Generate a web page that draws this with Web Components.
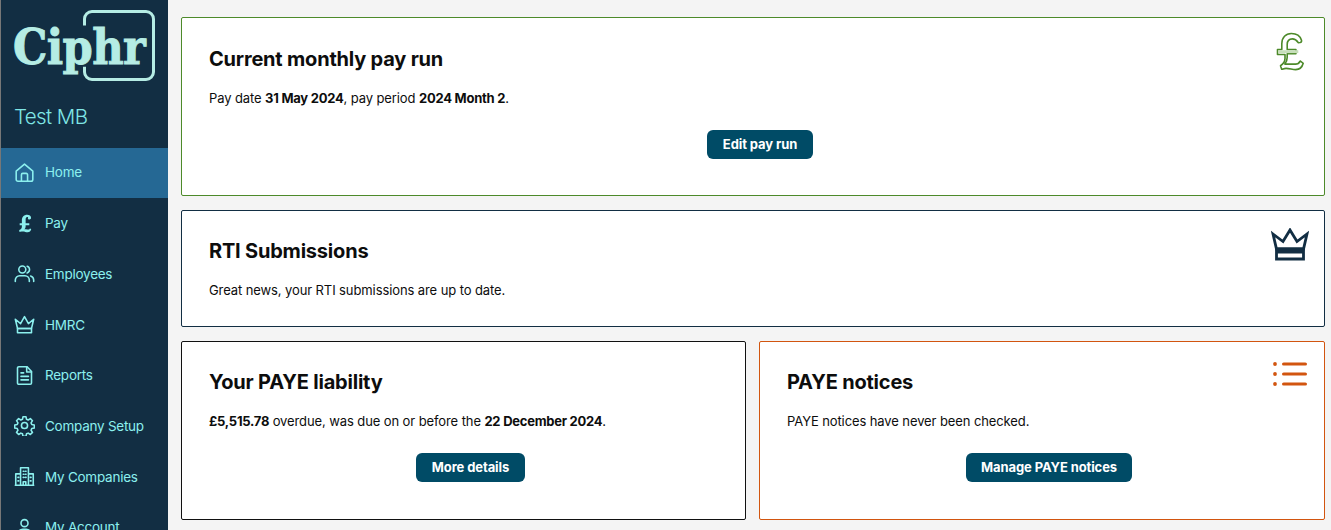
<!DOCTYPE html>
<html lang="en">
<head>
<meta charset="utf-8">
<title>Ciphr</title>
<style>
    html, body { margin: 0; height: 100%; overflow: hidden; background: #f4f4f4; }
    body { font-family: Inter, "Noto Sans", sans-serif; }
    b { font-weight: 700; letter-spacing: -.25px; }
</style>
</head>
<body>
<app-shell>
    <side-bar slot="nav" site="Test MB">
        <nav-item label="Home" icon="home" active></nav-item>
        <nav-item label="Pay" icon="pound"></nav-item>
        <nav-item label="Employees" icon="people"></nav-item>
        <nav-item label="HMRC" icon="crown"></nav-item>
        <nav-item label="Reports" icon="doc"></nav-item>
        <nav-item label="Company Setup" icon="gear"></nav-item>
        <nav-item label="My Companies" icon="building"></nav-item>
        <nav-item label="My Account" icon="user"></nav-item>
    </side-bar>
    <info-card heading="Current monthly pay run" accent="#4d8a2a" icon="pound" button="Edit pay run" style="grid-column: 1 / 3; height: 179px; --pad: 27px">
        Pay date <b>31 May 2024</b>, pay period <b>2024 Month 2</b>.
    </info-card>
    <info-card heading="RTI Submissions" accent="#122e43" icon="crown" style="grid-column: 1 / 3; height: 117px">
        Great news, your RTI submissions are up to date.
    </info-card>
    <info-card heading="Your PAYE liability" accent="#111" button="More details" style="height: 179px">
        <b>£5,515.78</b> overdue, was due on or before the <b>22 December 2024</b>.
    </info-card>
    <info-card heading="PAYE notices" accent="#d2550f" icon="list" button="Manage PAYE notices" style="height: 179px">
        PAYE notices have never been checked.
    </info-card>
</app-shell>

<script>
const ICONS = {
    home: '<path d="M2.500 10.500 12 2.500l9.500 8V20a2 2 0 0 1-2 2h-15a2 2 0 0 1-2-2Z"/><path d="M8.500 22v-7.500a1.500 1.500 0 0 1 1.500-1.500h4a1.500 1.500 0 0 1 1.500 1.500V22"/>',
    pound: '<path fill="currentColor" stroke="none" d="M6 21.500v-2c2-.7 3-2 3-4v-1.500H6.500v-2.300H9V8C9 4.500 11.500 2 15 2c2.500 0 4.500 1.200 4.500 3.500 0 1.200-.8 2-1.900 2-1 0-1.700-.7-1.700-1.600 0-.4.1-.7.3-1-.3-.2-.7-.3-1.100-.3-1.200 0-1.800 1-1.800 3v4h4.200v2.300h-4.200V15c0 1.500-.5 2.700-1.500 3.700 1.200-.2 2-.2 3 .1 1.500.4 2.700.2 3.400-1.200l1.500.8c-.6 2.500-2 3.600-4 3.600-2 0-3.700-.9-5.500-.9-1 0-1.700.2-2.700.4Z"/>',
    people: '<circle cx="9.500" cy="7.500" r="4"/><path d="M1.500 21v-1.500a5 5 0 0 1 5-5h6a5 5 0 0 1 5 5V21"/><path d="M15 3.700a4 4 0 0 1 0 7.600"/><path d="M19 14.800a5 5 0 0 1 3.500 4.700V21"/>',
    crown: '<path d="M1.500 6l6 5L12 3l4.500 8 6-5-2.500 10.500H4Z"/><path d="M4 16.500h16V21.500H4Z"/>',
    doc: '<path d="M5.500 2h9.500l5 5.500V20.500a1.500 1.500 0 0 1-1.500 1.500h-13a1.500 1.500 0 0 1-1.500-1.500v-17a1.500 1.500 0 0 1 1.500-1.500Z"/><path d="M14.500 2v6h5.500M8 9h3M8 13h8.500M8 17h8.500"/>',
    gear: '<circle cx="12" cy="12" r="3.500"/><path d="M10.300 2h3.400l.6 2.900 1.900.8 2.500-1.600 2.400 2.400-1.600 2.500.8 1.900 2.900.6v3.400l-2.900.6-.8 1.900 1.600 2.500-2.400 2.400-2.500-1.600-1.900.8-.6 2.900h-3.400l-.6-2.900-1.900-.8-2.500 1.600-2.400-2.400 1.600-2.500-.8-1.900-2.900-.6v-3.400l2.900-.6.8-1.900-1.600-2.500 2.400-2.400 2.500 1.600 1.900-.8Z"/>',
    building: '<path d="M7.500 22V2h9v20M7.500 9H2v13h5.500M16.500 9H22v13h-5.500M1.500 22h21M10.500 22v-4h3v4"/><path d="M10.500 6h.8M13 6h.8M10.500 9.500h.8M13 9.500h.8M10.500 13h.8M13 13h.8M4.500 13h1M4.500 17h1M18.500 13h1M18.500 17h1"/>',
    user: '<circle cx="12" cy="7" r="4"/><path d="M4 22v-2a6 6 0 0 1 6-6h4a6 6 0 0 1 6 6v2Z"/>'
};

class AppShell extends HTMLElement {
    constructor() {
        super();
        this.attachShadow({ mode: "open" }).innerHTML = `
        <style>
            :host { display: grid; grid-template-columns: 168px 1fr; height: 530px; overflow: hidden; }
            main {
                display: grid;
                grid-template-columns: 565px 566px;
                grid-auto-rows: min-content;
                column-gap: 13px;
                row-gap: 14px;
                padding: 17px 0 0 13px;
            }
        </style>
        <slot name="nav"></slot>
        <main><slot></slot></main>`;
    }
}

class SideBar extends HTMLElement {
    constructor() {
        super();
        this.attachShadow({ mode: "open" }).innerHTML = `
        <style>
            :host { display: block; background: #122e43; border-left: 1px solid #777; height: 530px; overflow: hidden; box-sizing: border-box; }
            .logo { display: flex; align-items: center; height: 105px; padding-left: 12px; position: relative; }
            .word {
                font: 700 48px/1 "DejaVu Serif Condensed", "DejaVu Serif", serif;
                font-stretch: condensed;
                letter-spacing: -.6px;
                color: #b5ece4;
                margin-top: -11px;
                -webkit-text-stroke: .9px #b5ece4;
            }
            .frame {
                position: absolute; left: 82px; top: 10px; width: 72px; height: 71px;
                box-sizing: border-box;
                border: 3px solid #b5ece4; border-radius: 9px;
                clip-path: polygon(0 0, 100% 0, 100% 100%, 0 100%, 0 80%, 6px 80%, 6px 22%, 0 22%);
            }
            .site { font-size: 20.500px; font-weight: 300; line-height: 26px; color: #7fe6e6; padding-left: 13px; margin-top: -1px; letter-spacing: -.6px; height: 43.600px; }
        </style>
        <div class="logo"><span class="word">Ciphr</span><span class="frame"></span></div>
        <div class="site">${this.getAttribute("site")}</div>
        <slot></slot>`;
    }
}

class NavItem extends HTMLElement {
    constructor() {
        super();
        const active = this.hasAttribute("active");
        this.attachShadow({ mode: "open" }).innerHTML = `
        <style>
            :host { display: flex; align-items: center; gap: 10px; box-sizing: border-box; height: 50.700px; padding: 0 0 1px 13px; color: #8cf0ee; font-size: 13.500px; letter-spacing: -.25px; background: ${active ? "#256894" : "transparent"}; }
            svg { width: 21px; height: 21px; flex: none; fill: none; stroke: currentColor; stroke-width: 1.800; stroke-linejoin: round; stroke-linecap: round; }
        </style>
        <svg viewBox="0 0 24 24">${ICONS[this.getAttribute("icon")]}</svg>
        <span>${this.getAttribute("label")}</span>`;
    }
}

const CARD_ICONS = {
    pound: '<svg width="30" height="40" viewBox="0 0 30 40" fill="none" stroke="#4d8a2a" stroke-width="1.600" stroke-linejoin="round"><path d="M2.500 17.500h4.300v-5.700C6.800 5.500 10.800 1.500 16.300 1.500c5.300 0 9 2.700 10.200 6.700.3 1.300-.2 2.100-1.400 2.300l-1.700.2c-1.900-2.500-3.800-3.800-6-3.800-3.200 0-5.200 2.300-5.200 5.700v4.900h8.700v4.300h-8.700v3.500c0 2.700-.9 5-2.300 6.800h10.500c2.600 0 3.800-.9 5-3.100l2.800 2.300c-1 3.900-3.700 6.300-7.500 6.300-3.500 0-6-1.200-9.600-1.200-1.500 0-3 .5-4.400.9l-1.200-3.600c2.600-1.600 4.500-3.900 4.500-7.100v-4.100H2.500Z"/><path d="M3.200 18.200h20.100v2.900H3.200Z" fill="#c7dfba" stroke="none"/></svg>',
    crown: '<svg width="38" height="33" viewBox="0 0 38 33" fill="none" stroke="#122e43" stroke-width="2.800" stroke-linejoin="miter"><path d="M2 6l10 7.500L19 2l7 11.500L36 6l-3.500 15h-27Z"/><path d="M5.500 21h27v10h-27Z"/><path d="M5.500 23h27" stroke-width="5"/></svg>',
    list: '<svg width="36" height="26" viewBox="0 0 36 26" fill="#d2550f"><circle cx="3" cy="3" r="1.900"/><circle cx="3" cy="13" r="1.900"/><circle cx="3" cy="23" r="1.900"/><rect x="10" y="1.400" width="25" height="3.200" rx="1.600"/><rect x="10" y="11.400" width="25" height="3.200" rx="1.600"/><rect x="10" y="21.400" width="25" height="3.200" rx="1.600"/></svg>'
};

class InfoCard extends HTMLElement {
    constructor() {
        super();
        const icon = this.getAttribute("icon");
        const button = this.getAttribute("button");
        this.attachShadow({ mode: "open" }).innerHTML = `
        <style>
            :host {
                display: block; position: relative; box-sizing: border-box;
                background: #fff; border: 1px solid ${this.getAttribute("accent")}; border-radius: 2px;
                padding: var(--pad, 26px) 27px 0; color: #0d0d0d;
            }
            h2 { margin: 0 0 14px; font-size: 20px; line-height: 29px; font-weight: 700; letter-spacing: -.2px; }
            p { margin: 0; font-size: 13px; line-height: 20px; letter-spacing: -.1px; }
            .actions { display: flex; justify-content: center; margin-top: 22px; padding-left: 14px; }
            .icon { position: absolute; top: 14px; right: 19px; }
            .crown { top: 17px; right: 15px; }
            .list { top: 19px; right: 16px; }
            button {
                font: 700 13px/1 Inter, sans-serif; color: #fff; background: #004b66; border: 0;
                border-radius: 6px; height: 29px; padding: 0 15.500px; letter-spacing: -.1px;
            }
        </style>
        <h2>${this.getAttribute("heading")}</h2>
        <p><slot></slot></p>
        ${button ? `<div class="actions"><button>${button}</button></div>` : ""}
        ${icon ? `<div class="icon ${icon}">${CARD_ICONS[icon]}</div>` : ""}`;
    }
}

customElements.define("app-shell", AppShell);
customElements.define("side-bar", SideBar);
customElements.define("nav-item", NavItem);
customElements.define("info-card", InfoCard);
</script>
</body>
</html>
